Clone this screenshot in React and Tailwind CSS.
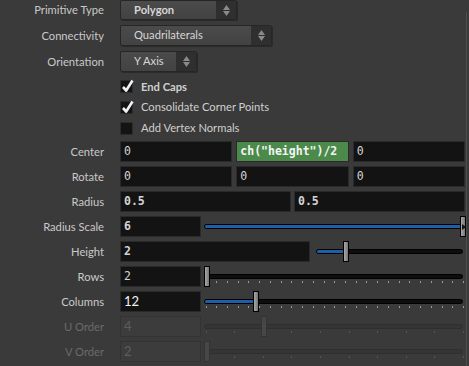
import React from "react";

const SANS = { fontFamily: "Lato, 'Noto Sans', sans-serif" };
const MONO = { fontFamily: "'DejaVu Sans Mono', 'Liberation Mono', monospace" };

function Label({ children, disabled }) {
  return (
    <div
      className={`w-[104px] shrink-0 text-right text-[11.2px] leading-none ${disabled ? "text-[#6a6a6a]" : "text-[#c9c9c9]"}`}
      style={SANS}
    >
      {children}
    </div>
  );
}

function Spinner() {
  return (
    <div className="flex h-full w-[20px] shrink-0 flex-col items-center justify-center gap-[1px] bg-[#2f2f2f]">
      <svg width="7" height="5" viewBox="0 0 7 5"><path d="M3.5 0 L7 5 L0 5 Z" fill="#8a8a8a" /></svg>
      <svg width="7" height="5" viewBox="0 0 7 5"><path d="M0 0 L7 0 L3.5 5 Z" fill="#8a8a8a" /></svg>
    </div>
  );
}

function Dropdown({ text, bold, width }) {
  return (
    <div
      className="flex h-full overflow-hidden rounded-[2px] border border-[#262626] bg-gradient-to-b from-[#4b4b4b] to-[#424242] shadow-[1px_1px_0_#2a2a2a]"
      style={{ width }}
    >
      <div
        className={`flex flex-1 items-center pl-[13px] text-[11.2px] text-[#d6d6d6] ${bold ? "font-bold" : ""}`}
        style={SANS}
      >
        {text}
      </div>
      <Spinner />
    </div>
  );
}

function Check({ checked, label, bold }) {
  return (
    <div className="flex items-center gap-[8px]">
      <div className="relative h-[13px] w-[13px] border border-[#2c2c2c] bg-[#141414]">
        {checked && (
          <svg className="absolute left-[1px] top-[-2px]" width="12" height="14" viewBox="0 0 12 14">
            <path d="M1 8 L4.2 11.5 L10.5 1.5" stroke="#f2f2f2" strokeWidth="2.6" fill="none" strokeLinejoin="round" />
          </svg>
        )}
      </div>
      <div className={`text-[11.2px] text-[#cfcfcf] ${bold ? "font-bold" : ""}`} style={SANS}>
        {label}
      </div>
    </div>
  );
}

function Field({ text, bold, green, disabled, className = "", sans, bright }) {
  let cls = "bg-[#131313] border-[#2a2a2a] text-[#d4d4d4]";
  if (green) cls = "bg-[#4b8a4b] border-[#2a2a2a] text-[#f4f4f4]";
  if (disabled) cls = "bg-[#3c3c3c] border-[#333333] text-[#5c5c5c]";
  if (bright) cls = "bg-[#131313] border-[#2a2a2a] text-[#f2f2f2]";
  return (
    <div
      className={`flex h-full items-center border pl-[3px] ${sans ? "text-[13px]" : "text-[11.5px]"} ${bold ? "font-bold" : ""} ${cls} ${className}`}
      style={sans ? SANS : MONO}
    >
      {text}
    </div>
  );
}

function Slider({ handle, ticks, tickCount, disabled, over }) {
  const tickList = [];
  if (ticks) {
    const start = 1.5;
    const end = 259;
    for (let i = 0; i < tickCount; i++) {
      tickList.push(start + ((end - start) * i) / (tickCount - 1));
    }
  }
  return (
    <div className="relative h-full flex-1">
      <div
        className={`absolute left-0 right-[2px] top-[8px] h-[5px] overflow-hidden rounded-[3px] border ${disabled ? "border-[#2f2f2f] bg-[#353535]" : "border-black bg-[#0e0e0e]"}`}
      >
        {!disabled && handle > 0 && (
          <div className="absolute left-0 top-0 h-full bg-[#1f5fa8]" style={{ width: handle }} />
        )}
      </div>
      {tickList.map((x, i) => (
        <div
          key={i}
          className={`absolute top-[15px] h-[2px] w-[1px] ${disabled ? "bg-[#555555]" : "bg-[#9a9a9a]"}`}
          style={{ left: Math.round(x) }}
        />
      ))}
      <div
        className={`absolute top-0 h-[21px] w-[6px] border ${disabled ? "border-[#333333] bg-[#474747]" : "border-black bg-gradient-to-r from-[#a8a8a8] to-[#767676]"}`}
        style={{ left: handle }}
      >
        {over && (
          <svg className="absolute left-[1px] top-[7px]" width="4" height="6" viewBox="0 0 4 6">
            <path d="M0 0 L4 3 L0 6 Z" fill="#111" />
          </svg>
        )}
      </div>
    </div>
  );
}

function Row({ label, disabled, children, className = "" }) {
  return (
    <div className={`flex h-[21px] items-center gap-[16px] ${className}`}>
      <Label disabled={disabled}>{label}</Label>
      <div className="flex h-full flex-1 items-center">{children}</div>
    </div>
  );
}

export default function App() {
  return (
    <div className="flex h-[366px] w-[469px] overflow-hidden bg-[#3a3a3a]">
      <div className="flex w-[465px] flex-col">
        <div className="flex h-[20px] items-center gap-[16px]">
          <Label>Primitive Type</Label>
          <Dropdown text="Polygon" bold width={117} />
        </div>
        <Row label="Connectivity" className="mt-[5px]">
          <Dropdown text="Quadrilaterals" width={152} />
        </Row>
        <Row label="Orientation" className="mt-[5px]">
          <Dropdown text="Y Axis" width={77} />
        </Row>
        <div className="mt-[5px] flex h-[20px] items-center pl-[120px]">
          <Check checked label="End Caps" bold />
        </div>
        <div className="flex h-[21px] items-center pl-[120px]">
          <Check checked label="Consolidate Corner Points" />
        </div>
        <div className="flex h-[21px] items-center pl-[120px]">
          <Check label="Add Vertex Normals" />
        </div>
        <div className="mt-[2px] flex flex-col gap-[4px]">
          <Row label="Center">
            <div className="flex h-full flex-1 gap-[4px]">
              <Field text="0" className="flex-1" />
              <Field text={'ch("height")/2'} green bold className="flex-1" />
              <Field text="0" className="flex-1" />
            </div>
          </Row>
          <Row label="Rotate">
            <div className="flex h-full flex-1 gap-[4px]">
              <Field text="0" className="flex-1" />
              <Field text="0" className="flex-1" />
              <Field text="0" className="flex-1" />
            </div>
          </Row>
          <Row label="Radius">
            <div className="flex h-full flex-1 gap-[3px]">
              <Field text="0.5" bold className="flex-1" />
              <Field text="0.5" bold className="flex-1" />
            </div>
          </Row>
          <Row label="Radius Scale">
            <div className="flex h-full flex-1 gap-[3px]">
              <Field text="6" bold className="w-[81px] shrink-0" />
              <Slider handle={256} over />
            </div>
          </Row>
          <Row label="Height">
            <div className="flex h-full flex-1 gap-[6px]">
              <Field text="2" bold className="w-[190px] shrink-0" />
              <Slider handle={27} />
            </div>
          </Row>
          <Row label="Rows">
            <div className="flex h-full flex-1 gap-[3px]">
              <Field text="2" className="w-[81px] shrink-0" />
              <Slider handle={0} ticks tickCount={25} />
            </div>
          </Row>
          <Row label="Columns">
            <div className="flex h-full flex-1 gap-[3px]">
              <Field text="12" sans bright className="w-[81px] shrink-0" />
              <Slider handle={49} ticks tickCount={25} />
            </div>
          </Row>
          <Row label="U Order" disabled>
            <div className="flex h-full flex-1 gap-[3px]">
              <Field text="4" disabled sans className="w-[81px] shrink-0" />
              <Slider handle={57} ticks tickCount={10} disabled />
            </div>
          </Row>
          <Row label="V Order" disabled>
            <div className="flex h-full flex-1 gap-[3px]">
              <Field text="2" disabled sans className="w-[81px] shrink-0" />
              <Slider handle={0} ticks tickCount={10} disabled />
            </div>
          </Row>
        </div>
      </div>
      <div className="ml-[1px] mt-[12px] w-[1px] bg-[#4e4e4e]" />
    </div>
  );
}
